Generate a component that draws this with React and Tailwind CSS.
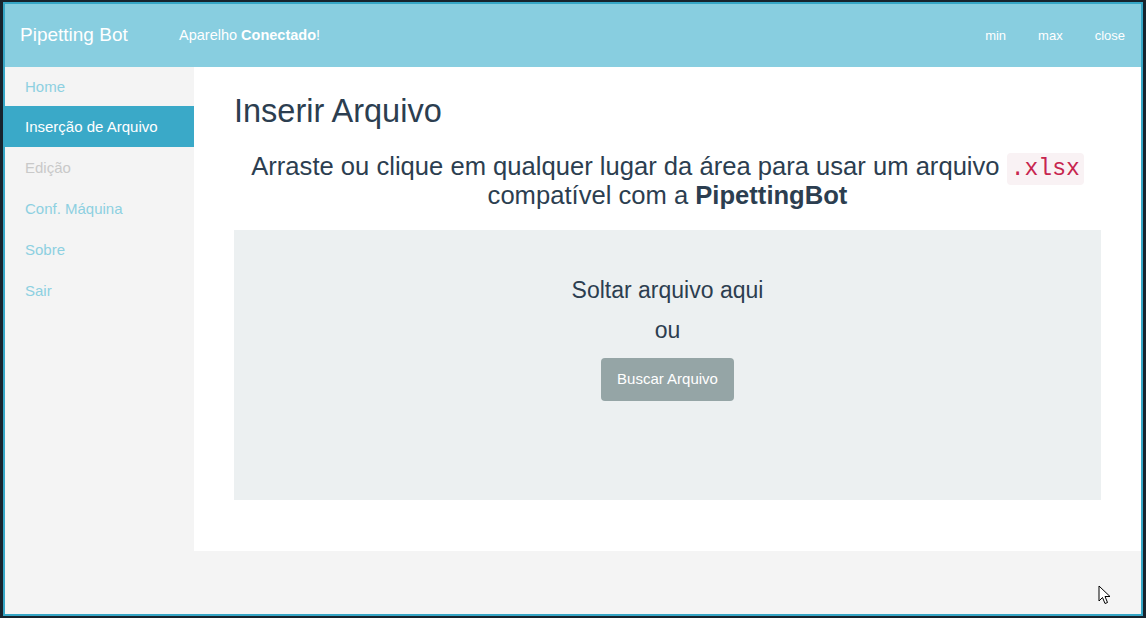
import React from "react";

const menu = [
  { label: "Home", first: true },
  { label: "Inserção de Arquivo", active: true },
  { label: "Edição", disabled: true },
  { label: "Conf. Máquina" },
  { label: "Sobre" },
  { label: "Sair" },
];

export default function App() {
  return (
    <div className="relative w-[1146px] h-[618px] bg-[#17232d] pt-[2px] pl-[3px] font-['Liberation_Sans',Arial,sans-serif] overflow-hidden">
      <div className="w-[1140px] h-[614px] border-2 border-[#36a6c6] bg-[#f4f4f4] flex flex-col">
        {/* Header */}
        <div className="h-[63px] bg-[#88cee0] flex items-center text-white shrink-0">
          <div className="pl-[15px] text-[19px] w-[174px]">Pipetting Bot</div>
          <div className="text-[14.5px]">
            Aparelho <span className="font-bold">Conectado</span>!
          </div>
          <div className="ml-auto flex text-[13px] pr-0">
            <span className="px-4">min</span>
            <span className="px-4">max</span>
            <span className="px-4">close</span>
          </div>
        </div>

        <div className="flex flex-1">
          {/* Sidebar */}
          <div className="w-[189px] shrink-0">
            {menu.map((item) => (
              <div
                key={item.label}
                className={`${item.first ? "h-[39px]" : "h-[41px]"} flex items-center pl-5 pt-px text-[15px] ${
                  item.active
                    ? "bg-[#3aa9c8] text-white"
                    : item.disabled
                    ? "text-[#c9c9c9]"
                    : "text-[#8dd0e1]"
                }`}
              >
                {item.label}
              </div>
            ))}
          </div>

          {/* Main */}
          <div className="flex-1 self-start bg-white px-10 pt-[27px] pb-[51px] text-[#2c3e50]">
            <h1 className="text-[32.5px] leading-[35px]">Inserir Arquivo</h1>
            <p className="mt-[23px] text-center text-[25.6px] leading-[29px]">
              Arraste ou clique em qualquer lugar da área para usar um arquivo{" "}
              <code className="font-['Liberation_Mono',monospace] text-[23px] leading-none bg-[#f9f2f4] text-[#c7254e] px-1 py-[3px] rounded">
                .xlsx
              </code>{" "}
              compatível com a <span className="font-bold">PipettingBot</span>
            </p>

            <div className="mt-[20px] h-[270px] bg-[#ecf0f1] flex flex-col items-center pt-[46px]">
              <div className="text-[23px] leading-[29px]">Soltar arquivo aqui</div>
              <div className="mt-[11px] text-[23px] leading-[29px]">ou</div>
              <button className="mt-[13px] h-[43px] px-4 bg-[#95a5a6] text-white text-[15px] rounded">
                Buscar Arquivo
              </button>
            </div>
          </div>
        </div>
      </div>

      {/* Mouse cursor */}
      <svg
        className="absolute left-[1098px] top-[585px]"
        width="14"
        height="20"
        viewBox="0 0 14 20"
      >
        <path
          d="M1 1 L1 16 L4.5 12.5 L7 18.5 L9.5 17.5 L7 11.5 L12 11.5 Z"
          fill="white"
          stroke="black"
          strokeWidth="1"
          strokeLinejoin="round"
        />
      </svg>
    </div>
  );
}
